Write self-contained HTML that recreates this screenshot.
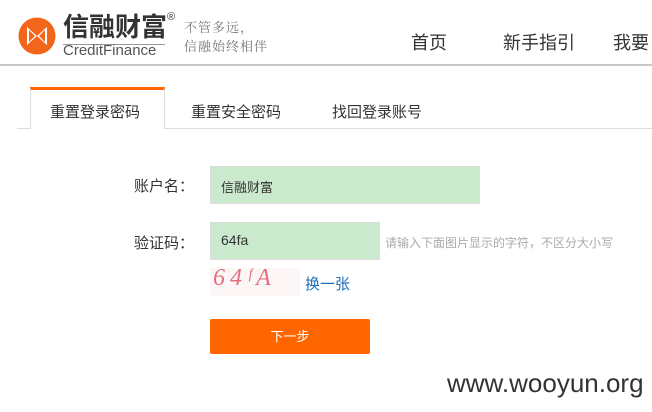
<!DOCTYPE html>
<html><head><meta charset="utf-8"><style>
*{margin:0;padding:0;box-sizing:border-box}
html,body{width:652px;height:412px;overflow:hidden}
body{background:#fff;font-family:"Liberation Sans","Noto Sans CJK SC",sans-serif;position:relative;color:#333}
.a{position:absolute;white-space:nowrap}
</style></head><body>
<svg class="a" style="left:18px;top:17px" width="38" height="38" viewBox="0 0 38 38">
<circle cx="19" cy="19" r="18.5" fill="#f2661c"/>
<path d="M9 10 L19 19 L9 28 Z M29 10 L19 19 L29 28 Z" fill="#fff"/>
<path d="M11 13 L17 19 L11 25 Z M27 13 L21 19 L27 25 Z" fill="#f2661c"/>
</svg>
<div class="a" style="left:63px;top:11px;font-size:26px;font-weight:bold;color:#333;font-family:'Noto Sans CJK SC',sans-serif;line-height:30px">信融财富</div>
<div class="a" style="left:167px;top:11px;font-size:11px;color:#333">®</div>
<div class="a" style="left:63px;top:44px;width:102px;border-top:1px solid #999"></div>
<div class="a" style="left:63px;top:42px;font-size:15px;color:#555;line-height:18px">CreditFinance</div>
<div class="a" style="left:184px;top:17px;font-size:13px;color:#777;line-height:19px;letter-spacing:1px;font-family:'Noto Serif CJK SC',serif">不管多远，<br>信融始终相伴</div>
<div class="a" style="left:411px;top:29px;font-size:18px;color:#333">首页</div>
<div class="a" style="left:503px;top:29px;font-size:18px;color:#333">新手指引</div>
<div class="a" style="left:613px;top:29px;font-size:18px;color:#333">我要</div>
<div class="a" style="left:0;top:64px;width:652px;height:2px;background:#c8c8c8"></div>

<div class="a" style="left:17px;top:128px;width:635px;height:1px;background:#ddd"></div>
<div class="a" style="left:30px;top:87px;width:135px;height:42px;background:#fff;border-left:1px solid #ddd;border-right:1px solid #ddd;border-top:3px solid #ff6600"></div>
<div class="a" style="left:50px;top:101px;font-size:15px;color:#333">重置登录密码</div>
<div class="a" style="left:191px;top:101px;font-size:15px;color:#333">重置安全密码</div>
<div class="a" style="left:332px;top:101px;font-size:15px;color:#333">找回登录账号</div>

<div class="a" style="left:134px;top:175px;font-size:15px;color:#333">账户名：</div>
<div class="a" style="left:210px;top:166px;width:270px;height:38px;background:#cbe9cc;border:1px solid #ddd"></div>
<div class="a" style="left:221px;top:177px;font-size:13px;color:#333">信融财富</div>
<div class="a" style="left:134px;top:232px;font-size:15px;color:#333">验证码：</div>
<div class="a" style="left:210px;top:222px;width:170px;height:38px;background:#cbe9cc;border:1px solid #ddd"></div>
<div class="a" style="left:221px;top:232px;font-size:14px;color:#333">64fa</div>
<div class="a" style="left:385px;top:234px;font-size:12px;color:#aaa">请输入下面图片显示的字符，不区分大小写</div>
<div class="a" style="left:210px;top:268px;width:90px;height:28px;background:#fdf6f7"></div>
<div class="a" style="left:213px;top:265px;font-size:24px;color:#e07080;font-style:italic;font-family:'Liberation Serif',serif;letter-spacing:5px">64ᶠA</div>
<div class="a" style="left:305px;top:273px;font-size:15px;color:#1a6fb5">换一张</div>
<div class="a" style="left:210px;top:319px;width:160px;height:35px;background:#ff6600;border-radius:2px;color:#fff;font-size:13px;text-align:center;line-height:35px">下一步</div>
<div class="a" style="left:447px;top:368px;font-size:26px;color:#333">www.wooyun.org</div>
</body></html>
